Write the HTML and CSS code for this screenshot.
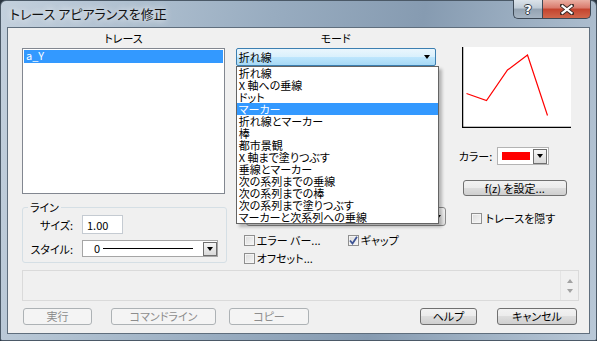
FILE: index.html
```html
<!DOCTYPE html>
<html lang="ja">
<head>
  <meta charset="UTF-8">
  <title>トレース アピアランスを修正</title>
  <link rel="stylesheet" href="styles.css">
</head>
<body>

  <div class="window">
    <div class="titlebar">
      <span class="title">トレース アピアランスを修正</span>
      <div class="caption-buttons">
        <span class="cap-btn help">?</span>
        <span class="cap-btn close">
          <svg width="14" height="11" viewBox="0 0 14 11">
            <path d="M2 1.5 L12 9.5 M12 1.5 L2 9.5" stroke="#3b2a26" stroke-width="4" stroke-linecap="square"/>
            <path d="M2.5 2 L11.5 9 M11.5 2 L2.5 9" stroke="#ffffff" stroke-width="2.2" stroke-linecap="square"/>
          </svg>
        </span>
      </div>
    </div>

    <div class="client">
      <div class="columns">

        <!-- trace list and line settings -->
        <div class="col-trace">
          <div class="caption">トレース</div>
          <div class="listbox">
            <div class="list-item selected">a_Y</div>
          </div>
          <fieldset class="group">
            <legend>ライン</legend>
            <div class="group-grid">
              <span class="field-label">サイズ:</span>
              <input class="edit" type="text" value="1.00">
              <span class="field-label">スタイル:</span>
              <div class="style-combo">
                <span class="style-zero">0</span>
                <span class="style-line"></span>
                <span class="drop-btn"><span class="tri"></span></span>
              </div>
            </div>
          </fieldset>
        </div>

        <!-- mode -->
        <div class="col-mode">
          <div class="caption">モード</div>
          <div class="combo-active">折れ線<span class="tri"></span></div>
          <div class="combo-plain"><span class="tri"></span></div>
          <div class="check-row">
            <label class="check"><span class="box"></span>エラー バー...</label>
            <label class="check gap-check"><span class="box checked">
              <svg width="9" height="9" viewBox="0 0 9 9"><path d="M1 4.5 L3.5 7.5 L8 0.8" fill="none" stroke="#3d5394" stroke-width="1.8"/></svg>
            </span>ギャップ</label>
          </div>
          <div class="check-row">
            <label class="check"><span class="box"></span>オフセット...</label>
          </div>

          <ul class="dropdown">
            <li>折れ線</li>
            <li>X 軸への垂線</li>
            <li>ドット</li>
            <li class="selected">マーカー</li>
            <li>折れ線とマーカー</li>
            <li>棒</li>
            <li>都市景観</li>
            <li>X 軸まで塗りつぶす</li>
            <li>垂線とマーカー</li>
            <li>次の系列までの垂線</li>
            <li>次の系列までの棒</li>
            <li>次の系列まで塗りつぶす</li>
            <li>マーカーと次系列への垂線</li>
          </ul>
        </div>

        <!-- preview and color -->
        <div class="col-preview">
          <svg class="preview" width="109" height="81" viewBox="0 0 109 81">
            <rect x="0" y="0" width="109" height="81" fill="#ffffff"/>
            <path d="M0.5 0 V80.5 H109" fill="none" stroke="#000000" stroke-width="1.5"/>
            <polyline points="4.5,46.5 24.5,53.5 45.5,23 65.5,8 85.5,68.5" fill="none" stroke="#ff0000" stroke-width="1.2"/>
          </svg>
          <div class="color-row">
            <span class="color-label">カラー:</span>
            <div class="color-combo">
              <span class="swatch"></span>
              <span class="drop-btn"><span class="tri"></span></span>
            </div>
          </div>
          <button class="btn fz-btn">f(z) を設定...</button>
          <label class="check hide-check"><span class="box"></span>トレースを隠す</label>
        </div>

      </div>

      <div class="status">
        <div class="status-scroll">
          <span class="arrow-up"></span>
          <span class="arrow-down"></span>
        </div>
      </div>

      <div class="buttons">
        <button class="btn disabled run-btn">実行</button>
        <button class="btn disabled cmd-btn">コマンドライン</button>
        <button class="btn disabled copy-btn">コピー</button>
        <button class="btn help-btn">ヘルプ</button>
        <button class="btn cancel-btn">キャンセル</button>
      </div>
    </div>
  </div>

</body>
</html>
```

FILE: styles.css
```css
body {
  margin: 0;
  width: 597px;
  height: 341px;
  overflow: hidden;
  background: #2a3541;
  font-family: "Noto Sans CJK JP", "Noto Sans", sans-serif;
  font-size: 11px;
  font-feature-settings: "palt";
  color: #000;
}

.window {
  width: 597px;
  height: 341px;
  box-sizing: border-box;
  border: 1px solid #4b5967;
  border-radius: 6px 6px 2px 2px;
  padding: 0 6px 6px 6px;
  display: flex;
  flex-direction: column;
  background: linear-gradient(100deg, #c3d0dd 0%, #afc0d0 20%, #98acc0 42%, #869bb1 65%, #a4b6c8 86%, #b9c8d7 100%);
}

/* title bar */
.titlebar {
  height: 26px;
  display: flex;
  align-items: flex-start;
  justify-content: space-between;
}

.title {
  padding-left: 3px;
  line-height: 26px;
  font-size: 13px;
  color: #111;
  text-shadow: 0 0 6px rgba(255, 255, 255, 0.9), 0 0 10px rgba(255, 255, 255, 0.6);
}

.caption-buttons {
  display: flex;
  margin-top: -1px;
  margin-right: -1px;
}

.cap-btn {
  height: 19px;
  box-sizing: border-box;
  border: 1px solid #3d4956;
  border-top: none;
  display: flex;
  align-items: center;
  justify-content: center;
}

.help {
  width: 29px;
  border-right: none;
  border-radius: 0 0 0 5px;
  background: linear-gradient(#dbe3ea 0%, #bfcbd6 45%, #94a3b2 50%, #a7b5c3 100%);
  font-family: "DejaVu Sans", sans-serif;
  font-weight: bold;
  font-size: 13px;
  color: #fff;
  text-shadow: 1px 0 0 #2f3a45, -1px 0 0 #2f3a45, 0 1px 0 #2f3a45, 0 -1px 0 #2f3a45;
}

.close {
  width: 49px;
  border-radius: 0 0 5px 0;
  background: linear-gradient(#eab0a3 0%, #d9796a 45%, #c4432d 50%, #d0674c 100%);
}

/* client area */
.client {
  flex: 1;
  background: #f0f0f0;
  border: 1px solid #5f6e7d;
  padding: 0 12px 0 14px;
  display: flex;
  flex-direction: column;
}

.columns {
  display: flex;
  height: 239px;
}

.caption {
  height: 20px;
  line-height: 20px;
  text-align: center;
}

.tri {
  display: inline-block;
  width: 0;
  height: 0;
  border-left: 3.5px solid transparent;
  border-right: 3.5px solid transparent;
  border-top: 4px solid #000;
}

/* left column */
.col-trace {
  width: 206px;
}

.col-trace .caption {
  width: 203px;
}

.listbox {
  width: 203px;
  height: 146px;
  box-sizing: border-box;
  border: 1px solid #828790;
  background: #fff;
  padding: 1px;
}

.list-item {
  height: 13px;
  line-height: 11px;
  padding-left: 2px;
}

.list-item.selected {
  background: #3399ff;
  color: #fff;
}

.group {
  margin: 7px 0 0 0;
  padding: 0;
  height: 62px;
  box-sizing: border-box;
  border: 1px solid #d5dfe5;
  border-radius: 3px;
}

.group legend {
  margin-left: 5px;
  padding: 0 2px;
  line-height: 12px;
}

.group-grid {
  display: grid;
  grid-template-columns: 50px auto;
  column-gap: 9px;
  row-gap: 6px;
  align-items: center;
  padding: 2px 0 0 0;
}

.field-label {
  text-align: right;
  white-space: nowrap;
}

.edit {
  width: 41px;
  height: 19px;
  box-sizing: border-box;
  margin: 0;
  border: 1px solid #c5cbd2;
  background: #fff;
  padding: 0 0 0 4px;
  font-family: inherit;
  font-size: 11px;
  outline: none;
}

.style-combo {
  width: 136px;
  height: 17px;
  box-sizing: border-box;
  border: 1px solid #a5a5a5;
  background: #fff;
  display: flex;
  align-items: center;
}

.style-zero {
  margin-left: 11px;
  width: 9px;
  line-height: 15px;
}

.style-line {
  width: 90px;
  height: 1px;
  background: #000;
}

.drop-btn {
  margin-left: auto;
  width: 14px;
  height: 14px;
  box-sizing: border-box;
  border: 1px solid #6f6f6f;
  background: linear-gradient(#f6f6f6, #d9d9d9);
  display: flex;
  align-items: center;
  justify-content: center;
}

/* middle column */
.col-mode {
  width: 210px;
  margin-left: 9px;
  position: relative;
}

.col-mode .caption {
  width: 200px;
}

.combo-active {
  width: 200px;
  height: 18px;
  box-sizing: border-box;
  border: 1px solid #3c7fb1;
  border-radius: 2px;
  background: linear-gradient(#eaf6fd 0%, #d9f0fc 50%, #bee6fd 50%, #a7d9f5 100%);
  padding: 0 5px 0 2px;
  line-height: 16px;
  display: flex;
  align-items: center;
  justify-content: space-between;
}

.combo-plain {
  margin: 141px 0 0 10px;
  width: 200px;
  height: 19px;
  box-sizing: border-box;
  border: 1px solid #8a8a8a;
  border-radius: 3px;
  background: linear-gradient(#f4f4f4, #e2e2e2);
  display: flex;
  align-items: center;
  justify-content: flex-end;
  padding-right: 4px;
}

.check-row {
  height: 18px;
  display: flex;
  align-items: center;
}

.combo-plain + .check-row {
  margin-top: 5px;
  position: relative;
}

.check {
  display: flex;
  align-items: center;
  line-height: 18px;
  white-space: nowrap;
}

.box {
  width: 11px;
  height: 11px;
  box-sizing: border-box;
  border: 1px solid #8f8f8f;
  background: linear-gradient(135deg, #dcdcdc, #f6f6f6);
  box-shadow: inset 0 0 0 1px #f4f4f4;
  margin-right: 2px;
  display: flex;
  align-items: center;
  justify-content: center;
}

.col-mode .check {
  margin-left: 8px;
}

.col-mode .gap-check {
  margin-left: 0;
  position: absolute;
  left: 112px;
}

.dropdown {
  position: absolute;
  left: 0;
  top: 38px;
  width: 201px;
  margin: 0;
  padding: 0;
  list-style: none;
  background: #fff;
  border: 1px solid #646464;
  box-shadow: 3px 3px 3px rgba(0, 0, 0, 0.25);
}

.dropdown li {
  height: 12px;
  line-height: 12px;
  padding-left: 2px;
  white-space: nowrap;
}

.dropdown li.selected {
  background: #3399ff;
  color: #fff;
}

/* right column */
.col-preview {
  width: 119px;
  margin-left: 13px;
  display: flex;
  flex-direction: column;
  align-items: flex-start;
}

.preview {
  display: block;
  margin: 19px 0 0 3px;
}

.color-row {
  margin-top: 19px;
  height: 18px;
  display: flex;
  align-items: center;
}

.color-label {
  width: 38px;
}

.color-combo {
  width: 52px;
  height: 18px;
  box-sizing: border-box;
  border: 1px solid #b3b3b3;
  background: #fff;
  display: flex;
  align-items: center;
  padding: 0 1px 0 4px;
}

.swatch {
  width: 28px;
  height: 8px;
  background: #ff0000;
}

.color-combo .drop-btn {
  height: 15px;
}

.btn {
  height: 17px;
  box-sizing: border-box;
  margin: 0;
  padding: 0;
  border: 1px solid #707070;
  border-radius: 3px;
  background: linear-gradient(#f2f2f2 0%, #ebebeb 50%, #dddddd 50%, #cfcfcf 100%);
  font-family: inherit;
  font-size: 11px;
  font-feature-settings: "palt";
  line-height: 15px;
  color: #000;
}

.btn.disabled {
  border-color: #adb2b5;
  background: #f4f4f4;
  color: #8d8d8d;
}

.fz-btn {
  margin: 15px 0 0 4px;
  width: 104px;
  height: 16px;
  line-height: 14px;
}

.hide-check {
  margin: 13px 0 0 12px;
  height: 18px;
}

.hide-check .box {
  margin-right: 4px;
}

/* status box */
.status {
  margin-top: 3px;
  width: 557px;
  height: 31px;
  box-sizing: border-box;
  border: 1px solid #dadada;
  display: flex;
  justify-content: flex-end;
}

.status-scroll {
  width: 17px;
  border-left: 1px solid #e4e4e4;
  display: flex;
  flex-direction: column;
  align-items: center;
  justify-content: space-between;
  padding: 8px 0 7px 0;
}

.arrow-up {
  width: 0;
  height: 0;
  border-left: 3.5px solid transparent;
  border-right: 3.5px solid transparent;
  border-bottom: 4px solid #a2a2a2;
}

.arrow-down {
  width: 0;
  height: 0;
  border-left: 3.5px solid transparent;
  border-right: 3.5px solid transparent;
  border-top: 4px solid #a2a2a2;
}

/* bottom buttons */
.buttons {
  margin-top: 7px;
  display: flex;
  margin-left: 1px;
}

.run-btn {
  width: 69px;
}

.cmd-btn {
  width: 105px;
  margin-left: 19px;
}

.copy-btn {
  width: 80px;
  margin-left: 13px;
}

.help-btn {
  width: 57px;
  margin-left: auto;
}

.cancel-btn {
  width: 80px;
  margin-left: 20px;
}
```
